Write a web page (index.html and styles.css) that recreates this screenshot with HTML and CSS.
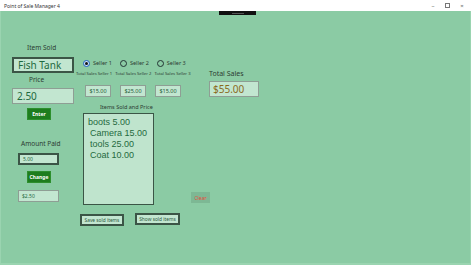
FILE: index.html
```html
<!DOCTYPE html>
<html lang="en">
<head>
    <meta charset="UTF-8">
    <meta name="viewport" content="width=device-width, initial-scale=1.0">
    <title>Point of Sale Manager 4</title>
    <link rel="stylesheet" href="styles.css">
</head>
<body>
    <div class="titlebar">
        <span class="title">Point of Sale Manager 4</span>
        <div class="window-controls">
            <span class="ctl">&#8211;</span>
            <span class="ctl restore"></span>
            <span class="ctl">&#215;</span>
        </div>
    </div>

    <div class="app">
        <div class="handle"><span></span></div>

        <div class="col-left">
            <div class="label item-sold">Item Sold</div>
            <div class="field big dark item-input">Fish Tank</div>
            <div class="label price">Price</div>
            <div class="field big price-input">2.50</div>
            <button class="btn-green enter">Enter</button>
            <div class="label amount">Amount Paid</div>
            <div class="field small dark paid">5.00</div>
            <button class="btn-green change">Change</button>
            <div class="field small change-out">$2.50</div>
        </div>

        <div class="col-mid">
            <div class="radios">
                <label class="radio checked"><span class="dot"></span>Seller 1</label>
                <label class="radio"><span class="dot"></span>Seller 2</label>
                <label class="radio"><span class="dot"></span>Seller 3</label>
            </div>
            <div class="seller-labels">
                <span>Total Sales Seller 1</span>
                <span>Total Sales Seller 2</span>
                <span>Total Sales Seller 3</span>
            </div>
            <div class="seller-totals">
                <div class="box">$15.00</div>
                <div class="box">$25.00</div>
                <div class="box">$15.00</div>
            </div>
            <div class="label list-title">Items Sold and Price</div>
            <div class="listbox">
                <div class="first">boots 5.00</div>
                <div>Camera 15.00</div>
                <div>tools 25.00</div>
                <div>Coat 10.00</div>
            </div>
            <div class="bottom-buttons">
                <button class="btn-outline save">Save sold items</button>
                <button class="btn-outline show">Show sold items</button>
            </div>
        </div>

        <div class="col-right">
            <div class="label total-label">Total Sales</div>
            <div class="field total">$55.00</div>
            <button class="btn-clear">Clear</button>
        </div>
    </div>
</body>
</html>
```

FILE: styles.css
```css
body {
    margin: 0;
    font-family: "Noto Sans", "Open Sans", sans-serif;
    background-color: #8bcba4;
    height: 265px;
    overflow: hidden;
}

.titlebar {
    height: 11px;
    background-color: #fff;
    display: flex;
    justify-content: space-between;
    align-items: center;
    padding: 0 4px;
    font-size: 5px;
    color: #333;
}

.window-controls {
    display: flex;
    gap: 9px;
    padding-right: 2px;
}

.ctl {
    width: 6px;
    text-align: center;
    font-size: 6px;
    color: #666;
}

.ctl.restore {
    width: 3px;
    height: 3px;
    border: 1px solid #777;
    margin-top: 1px;
}

.app {
    position: relative;
    display: flex;
    height: 254px;
    border-left: 1px solid #9ad4b0;
    border-right: 1px solid #9ad4b0;
    border-bottom: 2px solid #9ad4b0;
    box-sizing: border-box;
}

/* caption grip that sits over the content */
.handle {
    position: absolute;
    left: 218px;
    top: 0;
    width: 37px;
    height: 4px;
    background-color: #111;
    display: flex;
    justify-content: center;
    align-items: center;
}

.handle span {
    width: 12px;
    height: 1px;
    background-color: #555;
}

.label {
    font-size: 6.5px;
    color: #2b3b32;
    line-height: 9px;
}

.field {
    box-sizing: border-box;
    background-color: #c2e6d0;
    border: 1px solid #8e9e94;
    color: #1f6a3e;
    display: flex;
    align-items: center;
}

.field.dark {
    border: 2px solid #3b5546;
}

.field.big {
    width: 62px;
    height: 16px;
    font-size: 10px;
    padding-left: 4px;
}

.field.small {
    width: 41px;
    height: 12px;
    font-size: 5px;
    padding-left: 3px;
}

button {
    font-family: inherit;
    cursor: pointer;
    padding: 0;
}

.btn-green {
    width: 24px;
    height: 12px;
    background-color: #1e7d1e;
    border: 1px solid #2d8f2d;
    color: #fff;
    font-size: 5px;
    font-weight: bold;
}

/* left column */
.col-left {
    width: 75px;
    padding-left: 11px;
    box-sizing: border-box;
    display: flex;
    flex-direction: column;
    align-items: flex-start;
}

.item-sold { margin: 32px 0 0 15px; }
.item-input { margin-top: 5px; }
.price { margin: 2px 0 0 17px; }
.price-input { margin-top: 4px; }
.enter { margin: 4px 0 0 15px; }
.amount { margin: 19px 0 0 9px; }
.paid { margin: 5px 0 0 6px; }
.change { margin: 6px 0 0 15px; }
.change-out { margin: 7px 0 0 6px; }

/* middle column */
.col-mid {
    width: 115px;
    display: flex;
    flex-direction: column;
    align-items: flex-start;
}

.radios {
    display: flex;
    gap: 8px;
    margin: 48px 0 0 7px;
}

.radio {
    display: flex;
    align-items: center;
    gap: 3px;
    font-size: 5.5px;
    color: #2b3b32;
}

.radio .dot {
    width: 5px;
    height: 5px;
    border: 1px solid #233;
    border-radius: 50%;
    display: flex;
    align-items: center;
    justify-content: center;
}

.radio.checked .dot {
    border-color: #1f5fbf;
    background-color: #cfe3f7;
}

.radio.checked .dot::after {
    content: "";
    width: 3px;
    height: 3px;
    border-radius: 50%;
    background-color: #111;
}

.seller-labels {
    display: flex;
    gap: 3px;
    font-size: 4.2px;
    color: #2b3b32;
    margin-top: 4px;
    white-space: nowrap;
}

.seller-totals {
    display: flex;
    gap: 9px;
    margin: 9px 0 0 9px;
}

.box {
    box-sizing: border-box;
    width: 26px;
    height: 12px;
    background-color: #c2e6d0;
    border: 1px solid #8e9e94;
    color: #1f5a36;
    font-size: 5.5px;
    display: flex;
    align-items: center;
    justify-content: center;
}

.list-title {
    font-size: 5.5px;
    margin: 6px 0 0 24px;
}

.listbox {
    box-sizing: border-box;
    width: 71px;
    height: 92px;
    margin: 1px 0 0 7px;
    background-color: #bfe4cd;
    border: 1px solid #3b5546;
    padding: 3px 0 0 6px;
    font-family: "Liberation Sans", Arial, sans-serif;
    font-size: 9px;
    line-height: 11px;
    color: #1f6a3e;
}

.listbox .first {
    margin-left: -2px;
}

.bottom-buttons {
    display: flex;
    align-items: flex-start;
    gap: 11px;
    margin: 8px 0 0 4px;
}

.btn-outline {
    height: 12px;
    box-sizing: border-box;
    background-color: #c2e6d0;
    border: 2px solid #3b5546;
    color: #2e5a40;
    font-size: 4.8px;
    padding: 0 2px;
}

.btn-outline.save {
    width: 44px;
    margin-top: 1px;
}

.btn-outline.show {
    width: 45px;
}

/* right column */
.col-right {
    display: flex;
    flex-direction: column;
    align-items: flex-start;
}

.total-label {
    font-size: 7px;
    margin: 58px 0 0 18px;
}

.field.total {
    width: 50px;
    height: 16px;
    margin: 3px 0 0 18px;
    padding-left: 3px;
    font-size: 10px;
    color: #8a6a1e;
}

.btn-clear {
    margin: 95px 0 0 0;
    width: 19px;
    height: 11px;
    background-color: #7db894;
    border: none;
    color: #e5483a;
    font-size: 5px;
}
```
